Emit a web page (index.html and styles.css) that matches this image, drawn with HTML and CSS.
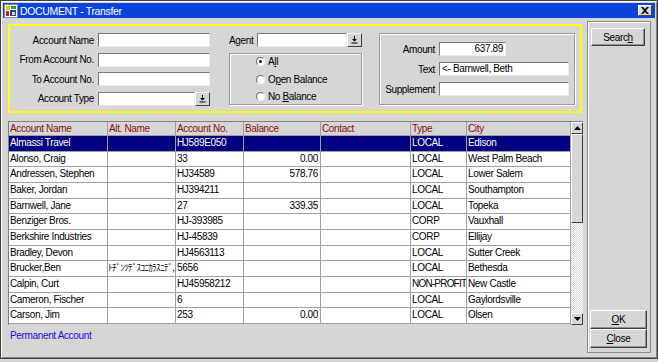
FILE: index.html
```html
<!DOCTYPE html>
<html lang="en">
<head>
  <meta charset="UTF-8" />
  <title>DOCUMENT - Transfer</title>
  <link rel="stylesheet" href="styles.css">
</head>
<body>
  <div class="window">
    <div class="titlebar">
      <svg class="app-icon" width="14" height="14" viewBox="0 0 14 14">
        <rect x="0" y="0" width="14" height="14" fill="#8c8c8c"/>
        <rect x="1" y="1" width="12" height="12" fill="#fff"/>
        <rect x="2" y="2" width="4" height="4" fill="#e8c800"/>
        <rect x="7" y="2" width="5" height="3" fill="#2aa02a"/>
        <rect x="2" y="7" width="3" height="5" fill="#d02020"/>
        <rect x="6" y="6" width="6" height="6" fill="#2040c0"/>
        <rect x="8" y="8" width="3" height="3" fill="#f0e040"/>
      </svg>
      <span class="title">DOCUMENT - Transfer</span>
      <div class="close-btn">
        <svg width="8" height="7" viewBox="0 0 8 7"><path d="M0 0h2l2 2 2-2h2L5 3.5 8 7H6L4 5 2 7H0l3-3.5z" fill="#000"/></svg>
      </div>
    </div>

    <div class="content">
      <div class="main">
        <div class="filter">
          <div class="fields">
            <label>Account Name</label><div class="input"></div>
            <label>From Account No.</label><div class="input"></div>
            <label>To Account No.</label><div class="input"></div>
            <label>Account Type</label>
            <div class="select"><div class="input"></div><div class="drop"><svg width="7" height="8" viewBox="0 0 7 8"><path d="M3 0h1v3h2L3.5 5.5 1 3h2z" fill="#000"/><rect x="0.5" y="6.5" width="6" height="1" fill="#000"/></svg></div></div>
          </div>

          <div class="col2">
            <div class="agent-row">
              <label>Agent</label>
              <div class="select"><div class="input"></div><div class="drop"><svg width="7" height="8" viewBox="0 0 7 8"><path d="M3 0h1v3h2L3.5 5.5 1 3h2z" fill="#000"/><rect x="0.5" y="6.5" width="6" height="1" fill="#000"/></svg></div></div>
            </div>
            <div class="radios etched">
              <div class="radio-row"><span class="radio checked"></span><span>A<u>l</u>l</span></div>
              <div class="radio-row"><span class="radio"></span><span>O<u>p</u>en Balance</span></div>
              <div class="radio-row"><span class="radio"></span><span>No <u>B</u>alance</span></div>
            </div>
          </div>

          <div class="amounts etched">
            <label>Amount</label><div class="input short num">637.89</div>
            <label>Text</label><div class="input">&lt;- Barnwell, Beth</div>
            <label>Supplement</label><div class="input"></div>
          </div>
        </div>

        <div class="list">
          <div class="rows">
            <div class="row head"><span>Account Name</span><span>Alt. Name</span><span>Account No.</span><span>Balance</span><span>Contact</span><span>Type</span><span>City</span></div>
            <div class="row sel"><span>Almassi Travel</span><span></span><span>HJ589E050</span><span class="num"></span><span></span><span>LOCAL</span><span>Edison</span></div>
            <div class="row"><span>Alonso, Craig</span><span></span><span>33</span><span class="num">0.00</span><span></span><span>LOCAL</span><span>West Palm Beach</span></div>
            <div class="row"><span>Andressen, Stephen</span><span></span><span>HJ34589</span><span class="num">578.76</span><span></span><span>LOCAL</span><span>Lower Salem</span></div>
            <div class="row"><span>Baker, Jordan</span><span></span><span>HJ394211</span><span class="num"></span><span></span><span>LOCAL</span><span>Southampton</span></div>
            <div class="row"><span>Barnwell, Jane</span><span></span><span>27</span><span class="num">339.35</span><span></span><span>LOCAL</span><span>Topeka</span></div>
            <div class="row"><span>Benziger Bros.</span><span></span><span>HJ-393985</span><span class="num"></span><span></span><span>CORP</span><span>Vauxhall</span></div>
            <div class="row"><span>Berkshire Industries</span><span></span><span>HJ-45839</span><span class="num"></span><span></span><span>CORP</span><span>Ellijay</span></div>
            <div class="row"><span>Bradley, Devon</span><span></span><span>HJ4563113</span><span class="num"></span><span></span><span>LOCAL</span><span>Sutter Creek</span></div>
            <div class="row"><span>Brucker,Ben</span><span class="kana">ﾄﾁﾞﾝﾂﾃﾞｽｺﾆｶﾗｽﾆﾃﾞ, Ben</span><span>5656</span><span class="num"></span><span></span><span>LOCAL</span><span>Bethesda</span></div>
            <div class="row"><span>Calpin, Curt</span><span></span><span>HJ45958212</span><span class="num"></span><span></span><span class="tight">NON-PROFIT</span><span>New Castle</span></div>
            <div class="row"><span>Cameron, Fischer</span><span></span><span>6</span><span class="num"></span><span></span><span>LOCAL</span><span>Gaylordsville</span></div>
            <div class="row"><span>Carson, Jim</span><span></span><span>253</span><span class="num">0.00</span><span></span><span>LOCAL</span><span>Olsen</span></div>
          </div>
          <div class="scroll">
            <div class="sbtn"><svg width="7" height="4" viewBox="0 0 7 4"><path d="M3.5 0L7 4H0z" fill="#000"/></svg></div>
            <div class="thumb"></div>
            <div class="track"></div>
            <div class="sbtn"><svg width="7" height="4" viewBox="0 0 7 4"><path d="M0 0h7L3.5 4z" fill="#000"/></svg></div>
          </div>
        </div>

        <div class="legend">Permanent Account</div>
      </div>

      <div class="side">
        <button class="search">Searc<u>h</u></button>
        <div class="spacer"></div>
        <button><u>O</u>K</button>
        <button><u>C</u>lose</button>
      </div>
    </div>
  </div>
</body>
</html>
```

FILE: styles.css
```css
* {
  box-sizing: border-box;
}
body {
  margin: 0;
  background: #d6d6d6;
  font-family: "Liberation Sans", Arial, sans-serif;
  font-size: 10px;
  letter-spacing: -0.35px;
  color: #000;
}
.window {
  width: 658px;
  height: 359px;
  border: 1px solid #404040;
  box-shadow: inset 1px 1px #fff, inset -1px -1px #808080;
  padding: 2px;
  display: flex;
  flex-direction: column;
}
.titlebar {
  height: 15px;
  background: #0b44dc;
  color: #fff;
  display: flex;
  align-items: center;
  gap: 2px;
  padding: 0 3px 0 1px;
  font-size: 10.5px;
}
.title {
  flex: 1;
}
.close-btn {
  width: 14px;
  height: 11px;
  background: #d6d6d6;
  border: 1px solid;
  border-color: #fff #404040 #404040 #fff;
  display: flex;
  align-items: center;
  justify-content: center;
}
.content {
  flex: 1;
  display: flex;
}
.main {
  width: 582px;
}

/* search criteria */
.filter {
  margin: 6px 0 0 5px;
  width: 574px;
  height: 89px;
  border: 2px solid #ffff00;
  padding-top: 7px;
  display: flex;
  align-items: flex-start;
}
.fields {
  display: grid;
  grid-template-columns: 84px 112px;
  column-gap: 4px;
  grid-auto-rows: 14px;
  row-gap: 5.67px;
  align-items: center;
}
.fields label,
.amounts label {
  text-align: right;
  white-space: nowrap;
}
.input {
  height: 14px;
  background: #fff;
  border: 1px solid;
  border-color: #7a7a7a #ececec #ececec #7a7a7a;
  padding: 0 2px;
  line-height: 12px;
  white-space: nowrap;
  overflow: hidden;
}
.input.num {
  text-align: right;
}
.select {
  display: flex;
  height: 14px;
}
.select .input {
  flex: 1;
}
.drop {
  width: 15px;
  height: 14px;
  background: #d6d6d6;
  border: 1px solid;
  border-color: #fff #404040 #404040 #fff;
  display: flex;
  align-items: center;
  justify-content: center;
}
.col2 {
  margin-left: 19px;
  width: 133px;
}
.agent-row {
  display: flex;
  align-items: center;
  gap: 4px;
  height: 14px;
}
.agent-row .select {
  flex: 1;
}
.etched {
  border: 1px solid #9a9a9a;
  box-shadow: inset 1px 1px #fff, 1px 1px #fff;
}
.radios {
  margin-top: 6px;
  height: 52px;
  padding-left: 26px;
  display: flex;
  flex-direction: column;
  gap: 2.3px;
}
.radio-row {
  height: 16px;
  display: flex;
  align-items: center;
  gap: 3px;
}
.radio {
  width: 9px;
  height: 9px;
  border-radius: 50%;
  background: #fff;
  border: 1px solid;
  border-color: #6a6a6a #f4f4f4 #f4f4f4 #6a6a6a;
  position: relative;
}
.radio.checked::after {
  content: "";
  position: absolute;
  left: 2px;
  top: 2px;
  width: 3px;
  height: 3px;
  border-radius: 50%;
  background: #000;
}
.amounts {
  margin-left: 17px;
  width: 196px;
  height: 72px;
  padding-top: 8px;
  display: grid;
  grid-template-columns: 55px 130px;
  column-gap: 4px;
  grid-auto-rows: 14px;
  row-gap: 6px;
  align-items: center;
}
.amounts .short {
  width: 67px;
}

/* account list */
.list {
  margin: 8px 0 0 5px;
  width: 575px;
  height: 204px;
  display: flex;
  border-top: 1px solid #808080;
  border-left: 1px solid #808080;
}
.rows {
  width: 562px;
}
.row {
  display: grid;
  grid-template-columns: 99px 68px 68px 77px 90px 56px 104px;
  height: 15.67px;
}
.row span {
  background: #fff;
  border-right: 1px solid #a0a0a0;
  border-bottom: 1px solid #a0a0a0;
  padding: 0 2px 0 1px;
  line-height: 14.67px;
  white-space: nowrap;
  overflow: hidden;
}
.row span.num {
  text-align: right;
}
.row span.tight {
  padding: 0 0 0 1px;
  letter-spacing: -0.8px;
}
.row span.kana {
  padding: 0;
  font-family: "Noto Sans CJK JP", sans-serif;
  font-size: 9px;
  letter-spacing: -0.6px;
}
.row.head {
  height: 14px;
}
.row.head span {
  background: #d6d6d6;
  color: #8b0f0f;
  line-height: 13px;
}
.row.sel span {
  background: #000080;
  color: #fff;
}
.scroll {
  width: 12px;
  display: flex;
  flex-direction: column;
  background-image: repeating-conic-gradient(#fff 0 25%, #d6d6d6 0 50%);
  background-size: 2px 2px;
}
.sbtn {
  height: 12px;
  background: #d6d6d6;
  border: 1px solid;
  border-color: #fff #404040 #404040 #fff;
  display: flex;
  align-items: center;
  justify-content: center;
}
.thumb {
  height: 89px;
  background: #d6d6d6;
  border: 1px solid;
  border-color: #fff #404040 #404040 #fff;
}
.track {
  flex: 1;
}
.legend {
  margin: 5px 0 0 7px;
  color: #1010e0;
  line-height: 12px;
}

/* buttons column */
.side {
  margin: 3px 0 3px 2px;
  width: 64px;
  border: 1px solid #8a8a8a;
  box-shadow: inset 1px 1px #fff;
  padding: 6px 3px 4px 2px;
  display: flex;
  flex-direction: column;
}
.side button {
  width: 57px;
  height: 19px;
  padding: 0;
  background: #d6d6d6;
  border: 1px solid;
  border-color: #fff #404040 #404040 #fff;
  box-shadow: inset -1px -1px #909090;
  font: inherit;
  letter-spacing: inherit;
  color: #000;
}
.side button.search {
  width: 54px;
  height: 18px;
  margin-left: 1px;
}
.spacer {
  flex: 1;
}
```
